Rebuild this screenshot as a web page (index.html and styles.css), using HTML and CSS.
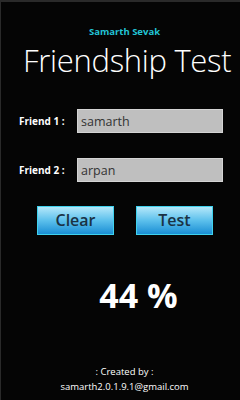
FILE: index.html
```html
<!DOCTYPE html>
<html lang="en">
<head>
<meta charset="UTF-8">
<meta name="viewport" content="width=device-width, initial-scale=1.0">
<title>Friendship Test</title>
<link rel="stylesheet" href="styles.css">
</head>
<body>

<div class="screen">
  <div class="author">Samarth Sevak</div>
  <h1 class="title">Friendship Test</h1>

  <div class="form">
    <div class="row">
      <label class="label" for="f1">Friend 1 :</label>
      <input class="field" id="f1" type="text" value="samarth">
    </div>
    <div class="row">
      <label class="label" for="f2">Friend 2 :</label>
      <input class="field" id="f2" type="text" value="arpan">
    </div>
  </div>

  <div class="buttons">
    <button class="btn">Clear</button>
    <button class="btn">Test</button>
  </div>

  <div class="score">44 %</div>

  <div class="footer">
    <div>: Created by :</div>
    <div>samarth2.0.1.9.1@gmail.com</div>
  </div>
</div>

</body>
</html>
```

FILE: styles.css
```css
html, body {
  margin: 0;
  background: #000;
}
body {
  font-family: "Open Sans", "Liberation Sans", sans-serif;
  color: #fff;
}
.screen {
  width: 240px;
  height: 400px;
  box-sizing: border-box;
  border-top: 2px solid #2a2a2a;
  border-left: 1px solid #2a2a2a;
  background: #050505;
  display: flex;
  flex-direction: column;
  overflow: hidden;
}
.author {
  margin-top: 25px;
  padding-left: 8px;
  text-align: center;
  color: #22c4d6;
  font-size: 9.5px;
  font-weight: 700;
  line-height: 10px;
}
.title {
  margin: 3px 0 0 22px;
  font-size: 31px;
  font-weight: 300;
  line-height: 40px;
  letter-spacing: -0.3px;
  white-space: nowrap;
}
.form {
  margin-top: 29px;
  display: flex;
  flex-direction: column;
  gap: 25px;
}
.row {
  display: flex;
  align-items: center;
}
.label {
  width: 58px;
  padding-left: 18px;
  font-size: 10px;
  font-weight: 700;
}
.field {
  width: 146px;
  height: 24px;
  box-sizing: border-box;
  margin: 0;
  padding: 0 3px;
  background: #bfbfbf;
  border: 1px solid #d4d4d4;
  border-radius: 0;
  color: #333;
  font-family: inherit;
  font-size: 12.5px;
  outline: none;
}
.buttons {
  margin-top: 24px;
  display: flex;
  gap: 22px;
  padding-left: 36px;
}
.btn {
  width: 77px;
  height: 29px;
  box-sizing: border-box;
  margin: 0;
  padding: 0 0 2px;
  border: 1px solid #3fd2ee;
  border-radius: 0;
  background: linear-gradient(#b4e8fa, #5cc0ec 50%, #1a8ed4);
  color: #1a3244;
  font-family: inherit;
  font-size: 16px;
  font-weight: 600;
  cursor: pointer;
}
.score {
  margin-top: 40px;
  padding-left: 36px;
  text-align: center;
  font-size: 34px;
  font-weight: 700;
  line-height: 40px;
}
.footer {
  margin-top: auto;
  margin-bottom: 6px;
  padding-left: 8px;
  text-align: center;
  font-size: 9.5px;
  line-height: 15px;
}
```
